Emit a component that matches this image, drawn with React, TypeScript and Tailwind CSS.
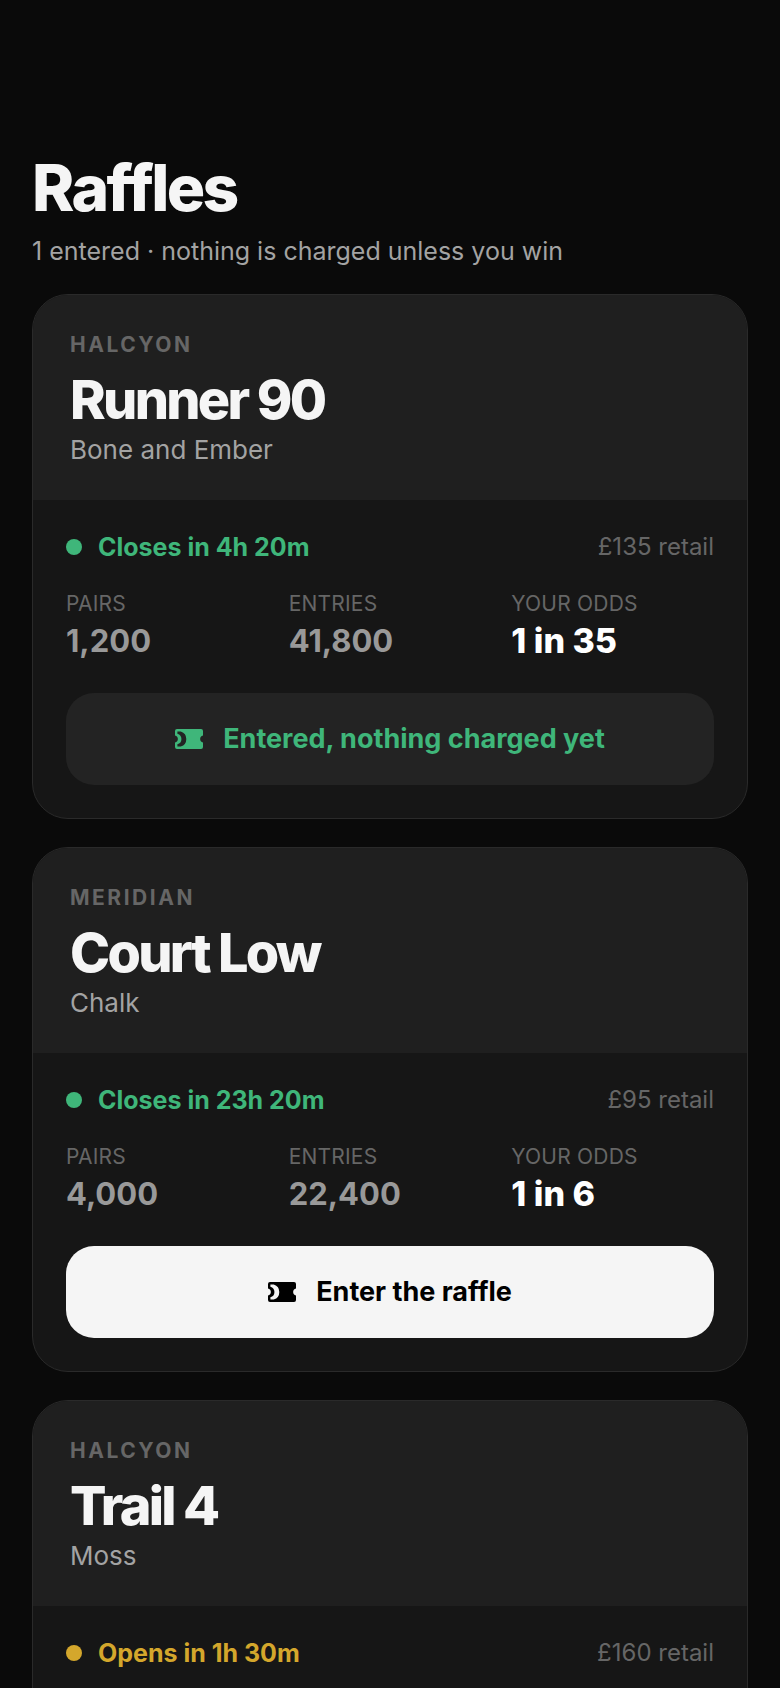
const raffles = [
  {
    brand: "HALCYON",
    name: "Runner 90",
    colorway: "Bone and Ember",
    status: "Closes in 4h 20m",
    tone: "green",
    retail: "£135 retail",
    pairs: "1,200",
    entries: "41,800",
    odds: "1 in 35",
    entered: true,
  },
  {
    brand: "MERIDIAN",
    name: "Court Low",
    colorway: "Chalk",
    status: "Closes in 23h 20m",
    tone: "green",
    retail: "£95 retail",
    pairs: "4,000",
    entries: "22,400",
    odds: "1 in 6",
    entered: false,
  },
  {
    brand: "HALCYON",
    name: "Trail 4",
    colorway: "Moss",
    status: "Opens in 1h 30m",
    tone: "amber",
    retail: "£160 retail",
    pairs: "900",
    entries: "12,100",
    odds: "1 in 14",
    entered: false,
  },
];

function TicketIcon({ className }: { className: string }) {
  return (
    <svg viewBox="0 0 28 20" className={className} aria-hidden="true">
      <path
        fill="currentColor"
        fillRule="evenodd"
        d="M2 0h24a2 2 0 0 1 2 2v4.4a3.7 3.7 0 0 0 0 7.2V18a2 2 0 0 1-2 2H2a2 2 0 0 1-2-2v-4.4a3.7 3.7 0 0 0 0-7.2V2a2 2 0 0 1 2-2Zm.4 2.4v2.3a5.5 5.5 0 0 1 0 10.6v2.3h3.4a8 8 0 0 0 0-15.2H2.4Z"
      />
    </svg>
  );
}

function Stat({ label, value, strong }: { label: string; value: string; strong?: boolean }) {
  return (
    <div>
      <p className="text-[21px] leading-[26px] tracking-[0.01em] text-[#666666]">{label}</p>
      <p className={`mt-[4px] leading-[40px] ${strong ? "text-[34px] font-extrabold text-white" : "text-[31px] font-bold text-[#999999]"}`}>
        {value}
      </p>
    </div>
  );
}

function RaffleCard({ raffle }: { raffle: (typeof raffles)[number] }) {
  const green = raffle.tone === "green";
  return (
    <article className="overflow-hidden rounded-[36px] border border-[#2a2a2a] bg-[#161616]">
      <div className="h-[205px] bg-[#1f1f1f] px-[37px] pt-[37px]">
        <p className="text-[21px] leading-[26px] font-bold tracking-[0.12em] text-[#666666]">{raffle.brand}</p>
        <h2 className="mt-[10px] text-[54px] leading-[64px] font-extrabold tracking-[-0.05em] text-[#f5f5f5]">
          {raffle.name}
        </h2>
        <p className="mt-[2px] text-[26px] leading-[32px] text-[#a3a3a3]">{raffle.colorway}</p>
      </div>
      <div className="px-[33px] pt-[30px] pb-[33px]">
        <div className="flex items-center justify-between">
          <div className="flex items-center gap-[16px]">
            <span className={`size-[16px] rounded-full ${green ? "bg-[#3fb67a]" : "bg-[#d4a72c]"}`} />
            <span className={`text-[25px] leading-[34px] font-bold ${green ? "text-[#3fb67a]" : "text-[#d4a72c]"}`}>
              {raffle.status}
            </span>
          </div>
          <span className="text-[24px] leading-[34px] text-[#666666]">{raffle.retail}</span>
        </div>
        <div className="mt-[27px] grid grid-cols-3 gap-[20px]">
          <Stat label="PAIRS" value={raffle.pairs} />
          <Stat label="ENTRIES" value={raffle.entries} />
          <Stat label="YOUR ODDS" value={raffle.odds} strong />
        </div>
        <button
          className={`mt-[32px] flex h-[92px] w-full items-center justify-center gap-[20px] rounded-[28px] text-[27px] font-bold ${
            raffle.entered ? "bg-[#232323] text-[#3fb67a]" : "bg-[#f5f5f5] text-black"
          }`}
        >
          <TicketIcon className="h-[20px] w-[28px]" />
          {raffle.entered ? "Entered, nothing charged yet" : "Enter the raffle"}
        </button>
      </div>
    </article>
  );
}

export default function App() {
  return (
    <main className="h-[1688px] overflow-hidden bg-[#0a0a0a] px-[32px] pt-[150px] font-['Inter',sans-serif]">
      <h1 className="text-[64px] leading-[76px] font-extrabold tracking-[-0.04em] text-[#f5f5f5]">Raffles</h1>
      <p className="mt-[8px] text-[25px] leading-[34px] text-[#a3a3a3]">1 entered · nothing is charged unless you win</p>
      <div className="mt-[26px] flex flex-col gap-[28px]">
        {raffles.map((raffle) => (
          <RaffleCard key={raffle.name} raffle={raffle} />
        ))}
      </div>
    </main>
  );
}
